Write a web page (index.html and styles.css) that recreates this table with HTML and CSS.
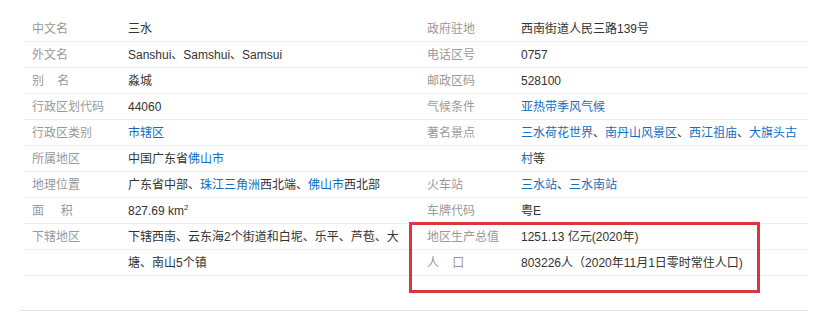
FILE: index.html
```html
<!DOCTYPE html>
<html lang="zh-CN">
<head>
<meta charset="utf-8">
<title>三水 基本信息</title>
<link rel="stylesheet" href="styles.css">
</head>
<body>
<div class="basic-info">
  <div class="cols">
    <dl class="col col-left">
      <div class="item"><dt>中文名</dt><dd>三水</dd></div>
      <div class="item"><dt>外文名</dt><dd>Sanshui、Samshui、Samsui</dd></div>
      <div class="item"><dt>别&nbsp;&nbsp;&nbsp;&nbsp;名</dt><dd>淼城</dd></div>
      <div class="item"><dt>行政区划代码</dt><dd>44060</dd></div>
      <div class="item"><dt>行政区类别</dt><dd><a href="#">市辖区</a></dd></div>
      <div class="item"><dt>所属地区</dt><dd>中国广东省<a href="#">佛山市</a></dd></div>
      <div class="item"><dt>地理位置</dt><dd>广东省中部、<a href="#">珠江三角洲</a>西北端、<a href="#">佛山市</a>西北部</dd></div>
      <div class="item"><dt>面&nbsp;&nbsp;&nbsp;&nbsp;&nbsp;积</dt><dd>827.69 km<sup>2</sup></dd></div>
      <div class="item"><dt>下辖地区</dt><dd>下辖西南、云东海2个街道和白坭、乐平、芦苞、大塘、南山5个镇</dd></div>
    </dl>
    <dl class="col col-right">
      <div class="item"><dt>政府驻地</dt><dd>西南街道人民三路139号</dd></div>
      <div class="item"><dt>电话区号</dt><dd>0757</dd></div>
      <div class="item"><dt>邮政区码</dt><dd>528100</dd></div>
      <div class="item"><dt>气候条件</dt><dd><a href="#">亚热带季风气候</a></dd></div>
      <div class="item"><dt>著名景点</dt><dd><a href="#">三水荷花世界</a>、<a href="#">南丹山风景区</a>、<a href="#">西江祖庙</a>、<a href="#">大旗头古村</a>等</dd></div>
      <div class="item"><dt>火车站</dt><dd><a href="#">三水站</a>、<a href="#">三水南站</a></dd></div>
      <div class="item"><dt>车牌代码</dt><dd>粤E</dd></div>
      <div class="item"><dt>地区生产总值</dt><dd>1251.13 亿元(2020年)</dd></div>
      <div class="item"><dt>人&nbsp;&nbsp;&nbsp;&nbsp;口</dt><dd>803226人（2020年11月1日零时常住人口)</dd></div>
    </dl>
  </div>
  <div class="highlight"></div>
</div>
</body>
</html>
```

FILE: styles.css
```css
html, body {
  margin: 0;
  padding: 0;
  background: #fff;
}

body {
  font-family: "Liberation Sans", "Noto Sans CJK SC", sans-serif;
  font-size: 12px;
  line-height: 26px;
  color: #333;
}

.basic-info {
  position: relative;
  margin-left: 20px;
  width: 788px;
  padding: 16px 0 34px;
  border-bottom: 1px solid #e3e3e3;
}

.cols {
  display: grid;
  grid-template-columns: 392px 392px;
  margin-left: 4px;
}

.col {
  margin: 0;
}

.item {
  display: flex;
  background: repeating-linear-gradient(to bottom, transparent 0, transparent 25px, #eeeeee 25px, #eeeeee 26px);
}

dt {
  flex: none;
  margin: 0;
  color: #999;
  white-space: nowrap;
}

dd {
  flex: 1;
  margin: 0;
  min-width: 0;
}

.col-left dt {
  width: 96px;
  padding-left: 8px;
}

.col-left dd {
  padding-right: 12px;
}

.col-right dt {
  width: 94px;
  padding-left: 11px;
}

a {
  color: #136ec2;
  text-decoration: none;
}

sup {
  font-size: 8px;
  line-height: 0;
  vertical-align: 5px;
}

.highlight {
  position: absolute;
  left: 389px;
  top: 222px;
  width: 351px;
  height: 71px;
  box-sizing: border-box;
  border: 3px solid #d9363e;
}
```
